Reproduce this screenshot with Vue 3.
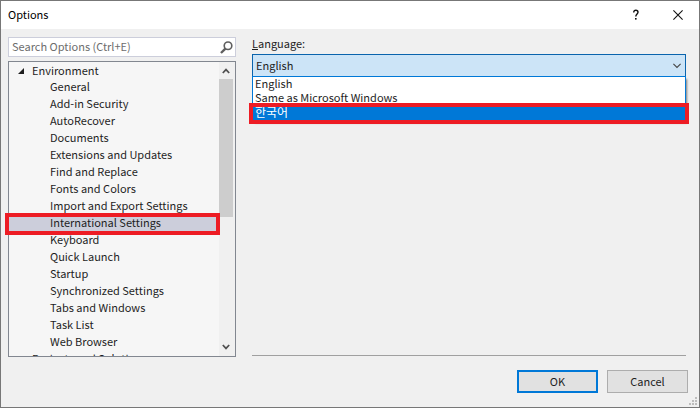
<template>
  <div class="dialog">
    <header class="title-bar">
      <h1 class="title">Options</h1>
      <button class="caption-btn" type="button" aria-label="Help">
        <svg width="10" height="12" viewBox="0 0 10 12">
          <path d="M2.7 3.4C2.7 1.9 3.6 1.3 4.8 1.3S7 2 7 3.3C7 4.9 4.8 5.2 4.8 7.6" fill="none" stroke="#111" stroke-width="1.4" />
          <rect x="4" y="9" width="1.6" height="1.6" fill="#111" />
        </svg>
      </button>
      <button class="caption-btn" type="button" aria-label="Close">
        <svg width="10" height="10" viewBox="0 0 10 10">
          <path d="M.4 .4L9.6 9.6M9.6 .4L.4 9.6" stroke="#111" stroke-width="1.1" />
        </svg>
      </button>
    </header>

    <main class="content">
      <section class="sidebar">
        <div class="search">
          <input v-model="query" class="search-input" type="text" placeholder="Search Options (Ctrl+E)" aria-label="Search Options" />
          <svg class="search-icon" width="13" height="13" viewBox="0 0 12 12">
            <circle cx="7.4" cy="4.4" r="3.5" fill="none" stroke="#5f5f5f" stroke-width="1.5" />
            <path d="M5 7L.9 11.1" stroke="#5f5f5f" stroke-width="2.2" />
          </svg>
        </div>

        <div class="tree">
          <ul class="tree-list">
            <li class="tree-row parent">
              <svg class="expander" width="6" height="6" viewBox="0 0 6 6"><path d="M6 0V6H0Z" fill="#1e1e1e" /></svg>
              Environment
            </li>
            <li
              v-for="page in pages"
              :key="page"
              class="tree-row"
              :class="{ selected: page === currentPage }"
              @click="currentPage = page"
            >{{ page }}</li>
            <li class="tree-row parent">
              <span class="expander"></span>
              Projects and Solutions
            </li>
          </ul>
          <div class="scrollbar">
            <svg class="arrow" width="8" height="6" viewBox="0 0 8 6"><path d="M.8 5L4 1.6L7.2 5" fill="none" stroke="#505050" stroke-width="1.7" /></svg>
            <div class="track"><div class="thumb"></div></div>
            <svg class="arrow" width="8" height="6" viewBox="0 0 8 6"><path d="M.8 1L4 4.4L7.2 1" fill="none" stroke="#505050" stroke-width="1.7" /></svg>
          </div>
          <div class="marker tree-marker"></div>
        </div>
      </section>

      <section class="panel">
        <label class="label" for="language"><u>L</u>anguage:</label>
        <div class="combo">
          <select id="language" v-model="language" class="combo-select">
            <option v-for="item in languages" :key="item.name" :lang="item.lang">{{ item.name }}</option>
          </select>
          <svg class="combo-arrow" width="8" height="6" viewBox="0 0 8 6"><path d="M.4 .8L4 4.4L7.6 .8" fill="none" stroke="#444" stroke-width="1.1" /></svg>
          <ul class="combo-list" role="listbox" aria-label="Language">
            <li
              v-for="item in languages"
              :key="item.name"
              class="combo-item"
              :class="{ active: item.name === hovered }"
              :lang="item.lang"
              role="option"
              @mouseenter="hovered = item.name"
            >{{ item.name }}</li>
          </ul>
          <div class="marker combo-marker"></div>
        </div>
      </section>
    </main>

    <footer class="footer">
      <button class="btn primary" type="button">OK</button>
      <button class="btn" type="button">Cancel</button>
      <svg class="grip" width="8" height="8" viewBox="0 0 8 8">
        <path d="M6 0h2v2H6zM3 3h2v2H3zM6 3h2v2H6zM0 6h2v2H0zM3 6h2v2H3zM6 6h2v2H6z" fill="#bdbdbd" />
      </svg>
    </footer>
  </div>
</template>

<script setup>
import { ref } from 'vue';

const pages = [
  'General',
  'Add-in Security',
  'AutoRecover',
  'Documents',
  'Extensions and Updates',
  'Find and Replace',
  'Fonts and Colors',
  'Import and Export Settings',
  'International Settings',
  'Keyboard',
  'Quick Launch',
  'Startup',
  'Synchronized Settings',
  'Tabs and Windows',
  'Task List',
  'Web Browser',
];
const languages = [
  { name: 'English', lang: 'en' },
  { name: 'Same as Microsoft Windows', lang: 'en' },
  { name: '한국어', lang: 'ko' },
];

const query = ref('');
const currentPage = ref('International Settings');
const language = ref('English');
const hovered = ref('한국어');
</script>

<style>
body {
  margin: 0;
}
</style>

<style scoped>
* {
  box-sizing: border-box;
}

.dialog {
  display: flex;
  flex-direction: column;
  height: 100vh;
  border: 1px solid #777;
  background: #f0f0f0;
  color: #1e1e1e;
  font-family: "Noto Sans CJK KR", sans-serif;
  font-size: 11px;
  line-height: 16px;
}

button,
input,
select {
  font: inherit;
  color: inherit;
}

ul {
  margin: 0;
  padding: 0;
  list-style: none;
}

/* --- TITLE BAR --- */
.title-bar {
  display: flex;
  align-items: center;
  height: 28px;
  padding: 0 6px 0 7px;
  background: #fff;
}
.title {
  flex: 1;
  margin: 0;
  padding-bottom: 2px;
  font-size: 11px;
  font-weight: normal;
  color: #000;
}
.caption-btn {
  display: flex;
  align-items: center;
  justify-content: center;
  width: 30px;
  height: 28px;
  margin-left: 12px;
  padding: 0;
  border: 0;
  background: none;
}

/* --- CONTENT --- */
.content {
  display: grid;
  grid-template-columns: 228px 1fr;
  grid-template-rows: minmax(0, 1fr);
  gap: 16px;
  flex: 1;
  min-height: 0;
  padding: 8px 13px 0 7px;
}
.sidebar {
  display: flex;
  flex-direction: column;
  gap: 4px;
}
.search {
  display: flex;
  align-items: center;
  height: 20px;
  padding-right: 2px;
  border: 1px solid #cccedb;
  background: #fff;
}
.search-input {
  flex: 1;
  min-width: 0;
  height: 18px;
  padding: 0 3px 2px;
  border: 0;
  outline: 0;
  background: none;
}
.search-input::placeholder {
  color: #6d6d6d;
  opacity: 1;
}

/* --- TREE --- */
.tree {
  position: relative;
  display: flex;
  flex: 1;
  min-height: 0;
  border: 1px solid #828790;
}
.tree-list {
  flex: 1;
  overflow: hidden;
  padding-top: 1px;
  background: #f6f6f6;
}
.tree-row {
  height: 17px;
  padding-left: 41px;
  line-height: 15px;
  white-space: nowrap;
}
.tree-row.parent {
  display: flex;
  gap: 8px;
  height: 16px;
  padding-left: 9px;
}
.tree-row.selected {
  background: #cccedb;
}
.expander {
  width: 6px;
  margin-top: 5px;
}
.scrollbar {
  display: flex;
  flex-direction: column;
  align-items: center;
  width: 16px;
  padding: 6px 2px 6px 0;
  background: #f0f0f0;
}
.track {
  flex: 1;
  align-self: stretch;
  padding: 5px 0;
}
.thumb {
  height: 53%;
  background: #cdcdcd;
}

/* --- RED MARKERS --- */
.marker {
  position: absolute;
  border: 4px solid #ed1c24;
  pointer-events: none;
}
.tree-marker {
  top: 151px;
  left: -4px;
  right: 15px;
  height: 22px;
}
.combo-marker {
  top: 49px;
  left: -3px;
  right: -3px;
  height: 21px;
}

/* --- LANGUAGE PANEL --- */
.panel {
  display: flex;
  flex-direction: column;
  margin-bottom: 1px;
  border-bottom: 1px solid #a0a0a0;
}
.label {
  height: 17px;
  line-height: 12px;
}
.combo {
  position: relative;
}
.combo-select {
  display: block;
  width: 100%;
  height: 23px;
  padding: 0 3px 2px;
  appearance: none;
  border: 1px solid #0a64ad;
  border-radius: 0;
  outline: 0;
  background: #cce4f7;
}
.combo-arrow {
  position: absolute;
  top: 9px;
  right: 5px;
  pointer-events: none;
}
.combo-list {
  position: absolute;
  top: 22px;
  left: 0;
  right: 0;
  border: 1px solid #0078d7;
  background: #fff;
  box-shadow: 2px 2px 2px -1px rgba(0, 0, 0, 0.5);
}
.combo-item {
  height: 14px;
  padding-left: 2px;
  line-height: 12px;
}
.combo-item:lang(ko) {
  font-size: 12px;
  line-height: 14px;
}
.combo-item.active {
  height: 16px;
  background: #0078d7;
  color: #fff;
}

/* --- FOOTER --- */
.footer {
  position: relative;
  display: flex;
  justify-content: flex-end;
  gap: 9px;
  padding: 13px 11px 14px;
}
.btn {
  width: 81px;
  height: 23px;
  padding: 0 0 2px;
  border: 1px solid #adadad;
  border-radius: 0;
  background: #e1e1e1;
}
.btn.primary {
  border: 2px solid #0078d7;
}
.grip {
  position: absolute;
  right: 2px;
  bottom: 2px;
}
</style>
